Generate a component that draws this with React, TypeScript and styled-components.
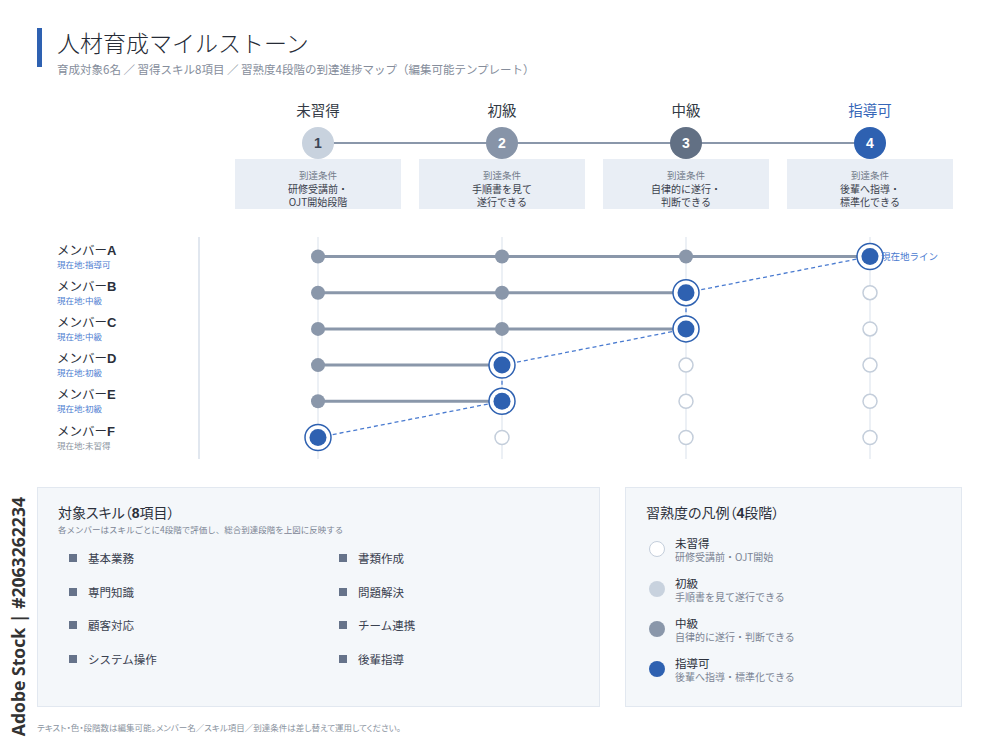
import React from "react";
import styled, { createGlobalStyle } from "styled-components";

const GlobalStyle = createGlobalStyle`
  html, body {
    margin: 0;
    padding: 0;
    background: #ffffff;
  }
  body {
    font-family: "Noto Sans CJK JP", "Noto Sans", "Liberation Sans", sans-serif;
    color: #2b303b;
  }
`;

type Tone = "none" | "basic" | "mid" | "lead";

interface Stage {
  label: string;
  n: number;
  tone: Tone;
  cond: string[];
}

const stages: Stage[] = [
  { label: "未習得", n: 1, tone: "none", cond: ["研修受講前・", "OJT開始段階"] },
  { label: "初級", n: 2, tone: "basic", cond: ["手順書を見て", "遂行できる"] },
  { label: "中級", n: 3, tone: "mid", cond: ["自律的に遂行・", "判断できる"] },
  { label: "指導可", n: 4, tone: "lead", cond: ["後輩へ指導・", "標準化できる"] },
];

const members = [
  { id: "A", level: 3, where: "指導可" },
  { id: "B", level: 2, where: "中級" },
  { id: "C", level: 2, where: "中級" },
  { id: "D", level: 1, where: "初級" },
  { id: "E", level: 1, where: "初級" },
  { id: "F", level: 0, where: "未習得" },
];

const skills = [
  "基本業務", "書類作成",
  "専門知識", "問題解決",
  "顧客対応", "チーム連携",
  "システム操作", "後輩指導",
];

const legend = [
  { tone: "none" as Tone, name: "未習得", desc: "研修受講前・OJT開始" },
  { tone: "basic" as Tone, name: "初級", desc: "手順書を見て遂行できる" },
  { tone: "mid" as Tone, name: "中級", desc: "自律的に遂行・判断できる" },
  { tone: "lead" as Tone, name: "指導可", desc: "後輩へ指導・標準化できる" },
];

const BLUE = "#2e61b1";
const DOT = "#8a97aa";
const EMPTY = "#c4cedb";

const stageBg: Record<Tone, string> = {
  none: "#c8d2de",
  basic: "#8794a8",
  mid: "#627084",
  lead: BLUE,
};

const legendBg: Record<Tone, string> = {
  none: "#ffffff",
  basic: "#c8d2de",
  mid: "#8a97aa",
  lead: BLUE,
};

// chart geometry (svg coordinates)
const COLS = [118, 302, 486, 670];
const ROW0 = 19.5;
const ROW_GAP = 36.2;
const CHART_W = 760;
const CHART_H = 222;

const ProgressChart = () => {
  const rowY = (i: number) => ROW0 + i * ROW_GAP;
  const path = members.map((m, i) => `${COLS[m.level]},${rowY(i)}`).join(" ");

  return (
    <svg width={CHART_W} height={CHART_H} viewBox={`0 0 ${CHART_W} ${CHART_H}`}>
      {COLS.map((x) => (
        <line key={x} x1={x} y1={0} x2={x} y2={CHART_H} stroke="#dfe6ef" strokeWidth={1.2} />
      ))}
      {members.map((m, i) =>
        m.level > 0 ? (
          <line
            key={`bar-${m.id}`}
            x1={COLS[0]}
            y1={rowY(i)}
            x2={COLS[m.level] - 12}
            y2={rowY(i)}
            stroke={DOT}
            strokeWidth={3}
          />
        ) : null
      )}
      <polyline points={path} fill="none" stroke="#4a7bd0" strokeWidth={1.3} strokeDasharray="4 3" />
      {members.map((m, i) =>
        COLS.map((x, c) => {
          const y = rowY(i);
          if (c < m.level) return <circle key={`${m.id}-${c}`} cx={x} cy={y} r={7} fill={DOT} />;
          if (c > m.level)
            return <circle key={`${m.id}-${c}`} cx={x} cy={y} r={7} fill="#fff" stroke={EMPTY} strokeWidth={1.5} />;
          return (
            <g key={`${m.id}-${c}`}>
              <circle cx={x} cy={y} r={13} fill="#fff" stroke={BLUE} strokeWidth={1.5} />
              <circle cx={x} cy={y} r={8.5} fill={BLUE} />
            </g>
          );
        })
      )}
      <text
        x={COLS[3] + 11}
        y={ROW0 + 3.5}
        fontSize={9.5}
        fill="#4a7bd0"
        fontFamily={'"Noto Sans CJK JP", sans-serif'}
      >
        現在地ライン
      </text>
    </svg>
  );
};

export default function App() {
  return (
    <Page>
      <GlobalStyle />
      <SideMark>Adobe Stock | #2063262234</SideMark>
      <Header>
        <Accent />
        <HeaderText>
          <Title>人材育成マイルストーン</Title>
          <Subtitle>育成対象6名 ／ 習得スキル8項目 ／ 習熟度4段階の到達進捗マップ（編集可能テンプレート）</Subtitle>
        </HeaderText>
      </Header>

      <StageGrid>
        <Track />
        {stages.map((s) => (
          <StageCol key={s.n}>
            <StageLabel $lead={s.tone === "lead"}>{s.label}</StageLabel>
            <StageBadge $tone={s.tone}>{s.n}</StageBadge>
            <CondBox>
              <CondHead>到達条件</CondHead>
              {s.cond.map((c) => (
                <CondLine key={c}>{c}</CondLine>
              ))}
            </CondBox>
          </StageCol>
        ))}
      </StageGrid>

      <ChartSection>
        <NameColumn>
          {members.map((m) => (
            <NameRow key={m.id}>
              <MemberName>
                メンバー<b>{m.id}</b>
              </MemberName>
              <MemberWhere $muted={m.level === 0}>現在地:{m.where}</MemberWhere>
            </NameRow>
          ))}
        </NameColumn>
        <ChartArea>
          <ProgressChart />
        </ChartArea>
      </ChartSection>

      <Panels>
        <Panel $wide>
          <PanelTitle>
            対象スキル（<b>8</b>項目）
          </PanelTitle>
          <PanelNote>各メンバーはスキルごとに4段階で評価し、総合到達段階を上図に反映する</PanelNote>
          <SkillGrid>
            {skills.map((s) => (
              <SkillItem key={s}>
                <SkillMark />
                {s}
              </SkillItem>
            ))}
          </SkillGrid>
        </Panel>
        <Panel>
          <PanelTitle>
            習熟度の凡例（<b>4</b>段階）
          </PanelTitle>
          <LegendList>
            {legend.map((l) => (
              <LegendItem key={l.name}>
                <LegendDot $tone={l.tone} />
                <LegendText>
                  <LegendName>{l.name}</LegendName>
                  <LegendDesc>{l.desc}</LegendDesc>
                </LegendText>
              </LegendItem>
            ))}
          </LegendList>
        </Panel>
      </Panels>

      <Footnote>テキスト・色・段階数は編集可能。メンバー名／スキル項目／到達条件は差し替えて運用してください。</Footnote>
    </Page>
  );
}

const Page = styled.div`
  position: relative;
  width: 1000px;
  height: 750px;
  box-sizing: border-box;
  padding: 28px 38px 0 37px;
  overflow: hidden;
`;

const SideMark = styled.div`
  position: absolute;
  left: 6px;
  top: 497px;
  writing-mode: vertical-rl;
  transform: rotate(180deg);
  font-family: "Open Sans", "Liberation Sans", sans-serif;
  font-weight: 700;
  font-size: 17.6px;
  color: #333333;
  white-space: nowrap;
`;

const Header = styled.div`
  display: flex;
  align-items: flex-start;
  gap: 15px;
`;

const Accent = styled.div`
  width: 5px;
  height: 39px;
  background: ${BLUE};
  flex: none;
`;

const HeaderText = styled.div`
  display: flex;
  flex-direction: column;
  gap: 6px;
`;

const Title = styled.h1`
  margin: 0;
  font-size: 23px;
  line-height: 28px;
  font-weight: 300;
  color: #262b36;
`;

const Subtitle = styled.p`
  margin: 0;
  font-size: 11.5px;
  line-height: 14px;
  color: #858d9b;
`;

const StageGrid = styled.div`
  position: relative;
  display: grid;
  grid-template-columns: repeat(4, 184px);
  margin: 24px 0 0 189px;
`;

const Track = styled.div`
  position: absolute;
  top: 42px;
  left: 92px;
  right: 92px;
  height: 2px;
  background: #8a97aa;
`;

const StageCol = styled.div`
  display: flex;
  flex-direction: column;
  align-items: center;
`;

const StageLabel = styled.div<{ $lead: boolean }>`
  font-size: 14.5px;
  line-height: 20px;
  color: ${({ $lead }) => ($lead ? "#3566b8" : "#333a45")};
`;

const StageBadge = styled.div<{ $tone: Tone }>`
  position: relative;
  z-index: 1;
  margin-top: 7px;
  width: 32px;
  height: 32px;
  border-radius: 50%;
  display: flex;
  align-items: center;
  justify-content: center;
  background: ${({ $tone }) => stageBg[$tone]};
  color: ${({ $tone }) => ($tone === "none" ? "#3b4656" : "#ffffff")};
  font-family: "Liberation Sans", sans-serif;
  font-weight: 700;
  font-size: 14px;
`;

const CondBox = styled.div`
  width: 166px;
  height: 50px;
  box-sizing: border-box;
  padding-top: 9px;
  background: #e9eef5;
  text-align: center;
`;

const CondHead = styled.div`
  font-size: 9.5px;
  line-height: 14px;
  color: #737c8b;
`;

const CondLine = styled.div`
  font-size: 10px;
  line-height: 13px;
  color: #3a404c;
`;

const ChartSection = styled.div`
  display: flex;
  margin-top: 28px;
  height: 222px;
`;

const NameColumn = styled.div`
  width: 163px;
  box-sizing: border-box;
  padding: 1px 0 0 20px;
  border-right: 2px solid #e1e7ef;
`;

const NameRow = styled.div`
  height: 36.2px;
  display: flex;
  flex-direction: column;
  justify-content: center;
`;

const MemberName = styled.div`
  font-size: 12.5px;
  line-height: 14px;
  color: #2b303b;

  b {
    font-family: "Liberation Sans", sans-serif;
    font-weight: 700;
    font-size: 13px;
  }
`;

const MemberWhere = styled.div<{ $muted: boolean }>`
  font-size: 8.5px;
  line-height: 12px;
  color: ${({ $muted }) => ($muted ? "#8a93a0" : "#4a7bd0")};
`;

const ChartArea = styled.div`
  flex: none;
  width: 760px;
  line-height: 0;
`;

const Panels = styled.div`
  display: flex;
  gap: 25px;
  margin-top: 28px;
`;

const Panel = styled.div<{ $wide?: boolean }>`
  width: ${({ $wide }) => ($wide ? "563px" : "337px")};
  height: 220px;
  box-sizing: border-box;
  padding: 14px 20px 0;
  background: #f4f7fa;
  border: 1px solid #e2e8f0;
`;

const PanelTitle = styled.div`
  font-size: 14px;
  line-height: 20px;
  color: #2b303b;
  font-feature-settings: "palt";

  b {
    font-family: "Liberation Sans", sans-serif;
    font-weight: 700;
  }
`;

const PanelNote = styled.div`
  font-size: 8.5px;
  line-height: 12px;
  color: #7b8494;
`;

const SkillGrid = styled.div`
  display: grid;
  grid-template-columns: 270px 1fr;
  grid-auto-rows: 33.7px;
  margin: 6px 0 0 11px;
`;

const SkillItem = styled.div`
  display: flex;
  align-items: center;
  gap: 11px;
  font-size: 11.5px;
  color: #3a4150;
`;

const SkillMark = styled.span`
  width: 8px;
  height: 8px;
  background: #66738a;
  flex: none;
`;

const LegendList = styled.div`
  margin-top: 6px;
  display: flex;
  flex-direction: column;
`;

const LegendItem = styled.div`
  height: 40px;
  display: flex;
  align-items: center;
  gap: 10px;
  padding-left: 3px;
`;

const LegendText = styled.div`
  display: flex;
  flex-direction: column;
`;

const LegendDot = styled.span<{ $tone: Tone }>`
  width: 16px;
  height: 16px;
  box-sizing: border-box;
  border-radius: 50%;
  flex: none;
  background: ${({ $tone }) => legendBg[$tone]};
  border: ${({ $tone }) => ($tone === "none" ? `1.5px solid ${EMPTY}` : "none")};
`;

const LegendName = styled.div`
  font-size: 11.5px;
  line-height: 14px;
  color: #2b303b;
`;

const LegendDesc = styled.div`
  font-size: 10px;
  line-height: 13px;
  color: #7b8494;
`;

const Footnote = styled.div`
  margin-top: 14px;
  font-size: 8.5px;
  line-height: 12px;
  color: #8a93a0;
  font-feature-settings: "palt";
`;
